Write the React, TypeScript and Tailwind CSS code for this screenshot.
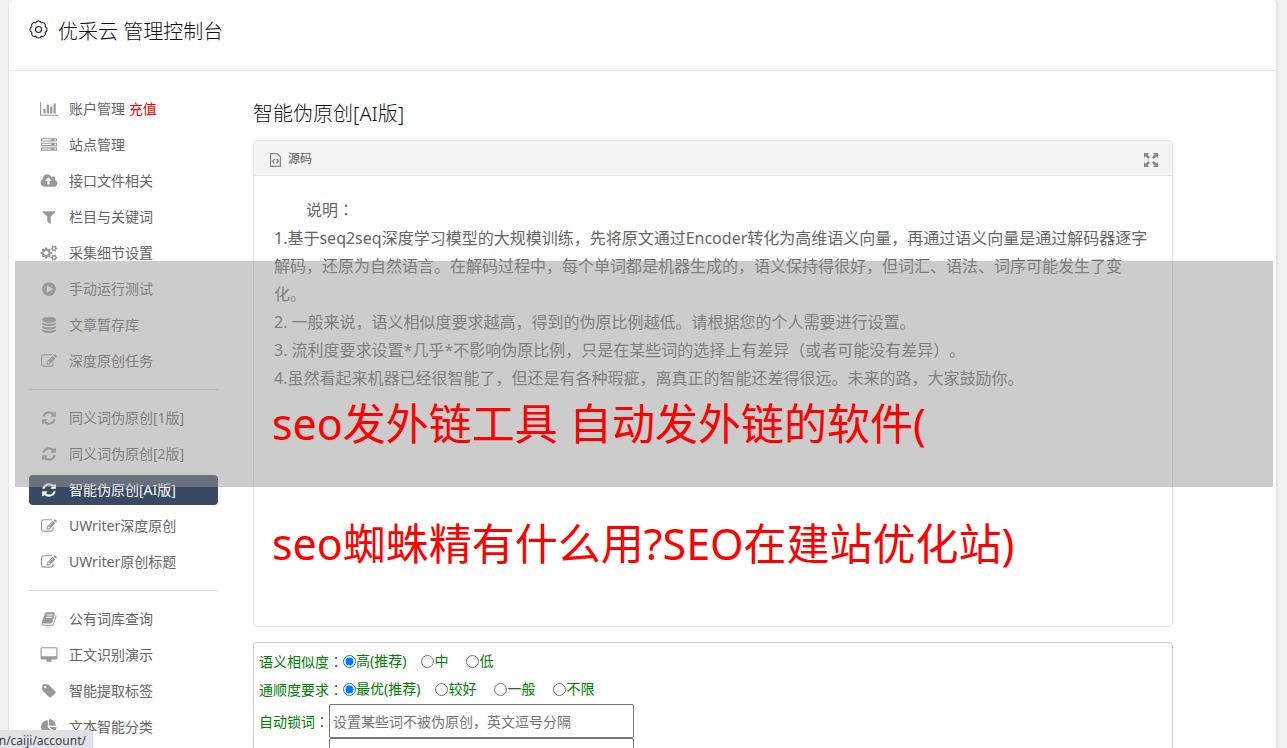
import { useState } from 'react';
import type { ReactNode } from 'react';

const icons = {
  chart: { box: '0 0 2048 1792', wide: true, d: 'M640 896v512h-256v-512h256zM1024 384v1024h-256v-1024h256zM2048 1536v128h-2048v-1536h128v1408h1920zM1408 640v768h-256v-768h256zM1792 256v1152h-256v-1152h256z' },
  server: { box: '0 0 1792 1792', wide: false, d: 'M128 1408h1024v-128h-1024v128zM128 896h1024v-128h-1024v128zM1696 1344q0-40-28-68t-68-28-68 28-28 68 28 68 68 28 68-28 28-68zM128 384h1024v-128h-1024v128zM1696 832q0-40-28-68t-68-28-68 28-28 68 28 68 68 28 68-28 28-68zM1696 320q0-40-28-68t-68-28-68 28-28 68 28 68 68 28 68-28 28-68zM1792 1152v384h-1792v-384h1792zM1792 640v384h-1792v-384h1792zM1792 128v384h-1792v-384h1792z' },
  cloud: { box: '-128 0 2048 1792', wide: true, d: 'M1216 864q0-14-9-23l-352-352q-9-9-23-9t-23 9l-351 351q-10 12-10 24 0 14 9 23t23 9h224v352q0 13 9.5 22.5t22.5 9.5h192q13 0 22.5-9.5t9.5-22.5v-352h224q13 0 22.5-9.5t9.5-22.5zm640 288q0 159-112.5 271.5t-271.5 112.5h-1088q-185 0-316.5-131.5t-131.5-316.5q0-130 70-240t188-165q-2-30-2-43 0-212 150-362t362-150q156 0 285.5 87t188.5 231q71-62 166-62 106 0 181 75t75 181q0 76-41 138 130 31 213.5 135.5t83.5 238.5z' },
  filter: { box: '0 0 1792 1792', wide: false, d: 'M1595 295q17 41-14 70l-493 493v742q0 42-39 59-13 5-25 5-27 0-45-19l-256-256q-19-19-19-45v-486l-493-493q-31-29-14-70 17-39 59-39h1280q42 0 59 39z' },
  cogs: { box: '-128 0 2048 1792', wide: true, d: 'M832 896q0-106-75-181t-181-75-181 75-75 181 75 181 181 75 181-75 75-181zm768 512q0-52-38-90t-90-38-90 38-38 90q0 53 37.5 90.5t90.5 37.5 90.5-37.5 37.5-90.5zm0-1024q0-52-38-90t-90-38-90 38-38 90q0 53 37.5 90.5t90.5 37.5 90.5-37.5 37.5-90.5zm-384 421v185q0 10-7 19.5t-16 10.5l-155 24q-11 35-32 76 34 48 90 115 7 11 7 20 0 12-7 19-23 30-82.5 89.5t-78.5 59.5q-11 0-21-7l-115-90q-37 19-77 31-11 108-23 155-7 24-30 24h-186q-11 0-20-7.5t-10-17.5l-23-153q-34-10-75-31l-118 89q-7 7-20 7-11 0-21-8-144-133-144-160 0-9 7-19 10-14 41-53t47-61q-23-44-35-82l-152-24q-10-1-17-9.5t-7-19.5v-185q0-10 7-19.5t16-10.5l155-24q11-35 32-76-34-48-90-115-7-11-7-20 0-12 7-20 22-30 82-89t79-59q11 0 21 7l115 90q34-18 77-32 11-108 23-154 7-24 30-24h186q11 0 20 7.5t10 17.5l23 153q34 10 75 31l118-89q8-7 20-7 11 0 21 8 144 133 144 160 0 8-7 19-12 16-42 54t-45 60q23 48 34 82l152 23q10 2 17 10.5t7 19.5zm640 533v140q0 16-149 31-12 27-30 52 51 113 51 138 0 4-4 7-122 71-124 71-8 0-46-47t-52-68q-20 2-30 2t-30-2q-14 21-52 68t-46 47q-2 0-124-71-4-3-4-7 0-25 51-138-18-25-30-52-149-15-149-31v-140q0-16 149-31 13-29 30-52-51-113-51-138 0-4 4-7 4-2 35-20t59-34 30-16q8 0 46 46.5t52 67.5q20-2 30-2t30 2q51-71 92-112l6-2q4 0 124 70 4 3 4 7 0 25-51 138 17 23 30 52 149 15 149 31zm0-1024v140q0 16-149 31-12 27-30 52 51 113 51 138 0 4-4 7-122 71-124 71-8 0-46-47t-52-68q-20 2-30 2t-30-2q-14 21-52 68t-46 47q-2 0-124-71-4-3-4-7 0-25 51-138-18-25-30-52-149-15-149-31v-140q0-16 149-31 13-29 30-52-51-113-51-138 0-4 4-7 4-2 35-20t59-34 30-16q8 0 46 46.5t52 67.5q20-2 30-2t30 2q51-71 92-112l6-2q4 0 124 70 4 3 4 7 0 25-51 138 17 23 30 52 149 15 149 31z' },
  play: { box: '0 0 1792 1792', wide: false, d: 'M896 128q209 0 385.5 103t279.5 279.5 103 385.5-103 385.5-279.5 279.5-385.5 103-385.5-103-279.5-279.5-103-385.5 103-385.5 279.5-279.5 385.5-103zm384 823q32-18 32-55t-32-55l-544-320q-31-19-64-1-32 19-32 56v640q0 37 32 56 16 8 32 8 17 0 32-9z' },
  database: { box: '0 0 1792 1792', wide: false, d: 'M896 768q237 0 443-43t325-127v170q0 69-103 128t-280 93.5-385 34.5-385-34.5-280-93.5-103-128v-170q119 84 325 127t443 43zm0 768q237 0 443-43t325-127v170q0 69-103 128t-280 93.5-385 34.5-385-34.5-280-93.5-103-128v-170q119 84 325 127t443 43zm0-384q237 0 443-43t325-127v170q0 69-103 128t-280 93.5-385 34.5-385-34.5-280-93.5-103-128v-170q119 84 325 127t443 43zm0-1152q208 0 385 34.5t280 93.5 103 128v128q0 69-103 128t-280 93.5-385 34.5-385-34.5-280-93.5-103-128v-128q0-69 103-128t280-93.5 385-34.5z' },
  edit: { box: '0 0 1792 1792', wide: false, d: 'M888 1184l116-116-152-152-116 116v56h96v96h56zm440-720q-16-16-33 1l-350 350q-17 17-1 33t33-1l350-350q17-17 1-33zm80 594v190q0 119-84.5 203.5t-203.5 84.5h-832q-119 0-203.5-84.5t-84.5-203.5v-832q0-119 84.5-203.5t203.5-84.5h832q63 0 117 25 15 7 18 23 3 17-9 29l-49 49q-14 14-32 8-23-6-45-6h-832q-66 0-113 47t-47 113v832q0 66 47 113t113 47h832q66 0 113-47t47-113v-126q0-13 9-22l64-64q15-15 35-7t20 29zm-96-738l288 288-672 672h-288v-288zm444 132l-92 92-288-288 92-92q28-28 68-28t68 28l152 152q28 28 28 68t-28 68z' },
  refresh: { box: '0 0 1792 1792', wide: false, d: 'M1639 1056q0 5-1 7-64 268-268 434.5t-478 166.5q-146 0-282.5-55t-243.5-157l-129 129q-19 19-45 19t-45-19-19-45v-448q0-26 19-45t45-19h448q26 0 45 19t19 45-19 45l-137 137q71 66 161 102t187 36q134 0 250-65t186-179q11-17 53-117 8-23 30-23h192q13 0 22.5 9.5t9.5 22.5zm25-800v448q0 26-19 45t-45 19h-448q-26 0-45-19t-19-45 19-45l138-138q-148-137-349-137-134 0-250 65t-186 179q-11 17-53 117-8 23-30 23h-199q-13 0-22.5-9.5t-9.5-22.5v-7q65-268 270-434.5t480-166.5q146 0 284 55.5t245 156.5l130-129q19-19 45-19t45 19 19 45z' },
  book: { box: '0 0 1792 1792', wide: false, d: 'M1703 478q40 57 18 129l-275 906q-19 64-76.5 107.5t-122.5 43.5h-923q-77 0-148.5-53.5t-99.5-131.5q-24-67-2-127 0-4 3-27t4-37q1-8-3-21.5t-3-19.5q2-11 8-21t16.5-23.5 16.5-23.5q23-38 45-91.5t30-91.5q3-10 .5-30t-.5-28q3-11 17-28t17-23q21-36 42-92t25-90q1-9-2.5-32t.5-28q4-13 22-30.5t22-22.5q19-26 42.5-84.5t27.5-96.5q1-8-3-25.5t-2-26.5q2-8 9-18t18-23 17-21q8-12 16.5-30.5t15-35 16-36 19.5-32 26.5-23.5 36-11.5 47.5 5.5l-1 3q38-9 51-9h761q74 0 114 56t18 130l-274 906q-36 119-71.5 153.5t-128.5 34.5h-869q-27 0-38 15-11 16-1 43 24 70 144 70h923q29 0 56-15.5t35-41.5l300-987q7-22 5-57 38 15 59 43zm-1064 2q-4 13 2 22.5t20 9.5h608q13 0 25.5-9.5t16.5-22.5l21-64q4-13-2-22.5t-20-9.5h-608q-13 0-25.5 9.5t-16.5 22.5zm-83 256q-4 13 2 22.5t20 9.5h608q13 0 25.5-9.5t16.5-22.5l21-64q4-13-2-22.5t-20-9.5h-608q-13 0-25.5 9.5t-16.5 22.5z' },
  desktop: { box: '-128 0 2048 1792', wide: true, d: 'M1728 992v-832q0-13-9.5-22.5t-22.5-9.5h-1600q-13 0-22.5 9.5t-9.5 22.5v832q0 13 9.5 22.5t22.5 9.5h1600q13 0 22.5-9.5t9.5-22.5zm128-832v1088q0 66-47 113t-113 47h-544q0 37 16 77.5t32 71 16 43.5q0 26-19 45t-45 19h-512q-26 0-45-19t-19-45q0-14 16-44t32-70 16-78h-544q-66 0-113-47t-47-113v-1088q0-66 47-113t113-47h1600q66 0 113 47t47 113z' },
  tag: { box: '0 0 1792 1792', wide: false, d: 'M576 448q0-53-37.5-90.5t-90.5-37.5-90.5 37.5-37.5 90.5 37.5 90.5 90.5 37.5 90.5-37.5 37.5-90.5zm1067 576q0 53-37 90l-491 492q-39 37-91 37-53 0-90-37l-715-716q-38-37-64.5-101t-26.5-117v-416q0-52 38-90t90-38h416q53 0 117 26.5t102 64.5l715 714q37 39 37 91z' },
  pie: { box: '0 0 1792 1792', wide: false, d: 'M768 890l546 546q-106 108-247.5 168t-298.5 60q-209 0-385.5-103t-279.5-279.5-103-385.5 103-385.5 279.5-279.5 385.5-103v762zm187 6h773q0 157-60 298.5t-168 247.5zm709-128h-768v-768q209 0 385.5 103t279.5 279.5 103 385.5z' },
};

type IconName = keyof typeof icons;

function Icon({ name }: { name: IconName }) {
  const icon = icons[name];
  return (
    <svg viewBox={icon.box} className={icon.wide ? 'h-4 w-[18px]' : 'h-4 w-4'} fill="currentColor" aria-hidden="true">
      <path d={icon.d} />
    </svg>
  );
}

function GearIcon() {
  return (
    <svg viewBox="0 0 19 19" className="mt-1 size-[19px] text-[#222]" fill="none" stroke="currentColor" strokeWidth="1.1" strokeLinejoin="round" aria-hidden="true">
      <path d="M6.74 2.85a2.95 2.95 0 0 1 5.52 0a2.95 2.95 0 0 1 3.89 3.89a2.95 2.95 0 0 1 0 5.52a2.95 2.95 0 0 1-3.89 3.89a2.95 2.95 0 0 1-5.52 0a2.95 2.95 0 0 1-3.89-3.89a2.95 2.95 0 0 1 0-5.52a2.95 2.95 0 0 1 3.89-3.89z" />
      <circle cx="9.5" cy="9.5" r="3" />
    </svg>
  );
}

function FileCodeIcon() {
  return (
    <svg viewBox="0 0 11 14" className="mt-0.5 h-3.5 w-[11px] text-[#888]" fill="none" stroke="currentColor" aria-hidden="true">
      <path d="M.6.6h6.6l3.2 3.2v9.6H.6z" strokeWidth="1.2" />
      <path d="M4.5 6 2.5 8.2l2 2.2M6.5 6l2 2.2-2 2.2" strokeWidth="1.3" />
    </svg>
  );
}

function ExpandIcon() {
  return (
    <svg viewBox="0 0 14 14" className="mt-0.5 size-3.5" fill="currentColor" aria-hidden="true">
      <path d="M0 0h5L3.4 1.6 6 4.3 4.3 6 1.6 3.4 0 5zM14 0v5l-1.6-1.6L9.7 6 8 4.3l2.6-2.7L9 0zM0 14V9l1.6 1.6L4.3 8 6 9.7l-2.6 2.7L5 14zM14 14H9l1.6-1.6L8 9.7 9.7 8l2.7 2.6L14 9z" />
    </svg>
  );
}

const groups: { icon: IconName; label: string; extra?: string; active?: boolean }[][] = [
  [
    { icon: 'chart', label: '账户管理', extra: '充值' },
    { icon: 'server', label: '站点管理' },
    { icon: 'cloud', label: '接口文件相关' },
    { icon: 'filter', label: '栏目与关键词' },
    { icon: 'cogs', label: '采集细节设置' },
    { icon: 'play', label: '手动运行测试' },
    { icon: 'database', label: '文章暂存库' },
    { icon: 'edit', label: '深度原创任务' },
  ],
  [
    { icon: 'refresh', label: '同义词伪原创[1版]' },
    { icon: 'refresh', label: '同义词伪原创[2版]' },
    { icon: 'refresh', label: '智能伪原创[AI版]', active: true },
    { icon: 'edit', label: 'UWriter深度原创' },
    { icon: 'edit', label: 'UWriter原创标题' },
  ],
  [
    { icon: 'book', label: '公有词库查询' },
    { icon: 'desktop', label: '正文识别演示' },
    { icon: 'tag', label: '智能提取标签' },
    { icon: 'pie', label: '文本智能分类' },
  ],
];

function Sidebar() {
  return (
    <nav className="w-[189px] shrink-0 text-sm text-[#666]">
      {groups.map((group, i) => (
        <ul key={i} className={i === 0 ? 'space-y-1.5' : 'mt-[13px] space-y-1.5 border-t border-[#ddd] pt-[13px]'}>
          {group.map((item) => (
            <li key={item.label}>
              <a
                href="#"
                className={
                  item.active
                    ? 'flex h-[30px] items-center gap-2.5 rounded bg-[#394963] px-2.5 text-white'
                    : 'flex h-[30px] items-center gap-2.5 rounded px-2.5'
                }
              >
                <span className={item.active ? 'flex w-5 justify-center' : 'flex w-5 justify-center text-[#999]'}>
                  <Icon name={item.icon} />
                </span>
                <span>
                  {item.label}
                  {item.extra && <span className="text-[#f00]"> {item.extra}</span>}
                </span>
              </a>
            </li>
          ))}
        </ul>
      ))}
    </nav>
  );
}

// The Japanese glyph of the full-width colon sits in the middle of its cell.
function Colon() {
  return (
    <span lang="ja" className="font-['Noto_Sans_CJK_JP',sans-serif]">
      ：
    </span>
  );
}

function RadioRow({ name, label, options }: { name: string; label: string; options: string[] }) {
  const [value, setValue] = useState(options[0]);
  return (
    <fieldset className="flex h-7 items-center">
      <legend className="float-left">
        {label}
        <Colon />
      </legend>
      <div className="flex items-center gap-[18px]">
        {options.map((option) => (
          <label key={option} className="flex items-center first:-mr-[3px]">
            <input
              type="radio"
              name={name}
              checked={value === option}
              onChange={() => setValue(option)}
              className="size-[13px]"
            />
            {option}
          </label>
        ))}
      </div>
    </fieldset>
  );
}

function Banner({ children }: { children: ReactNode }) {
  return <p className="text-[43px] leading-[60px] text-[#f00]">{children}</p>;
}

export default function App() {
  return (
    <div
      lang="zh-CN"
      className="relative h-screen overflow-hidden bg-[#f0f0f0] pr-[9px] pl-2 font-['Noto_Sans','Noto_Sans_CJK_SC',sans-serif] [text-spacing-trim:space-all]"
    >
      <div className="min-h-full rounded-t border-r-2 border-l border-[#e5e5e5] bg-white">
        <header className="flex h-[71px] items-start gap-2.5 border-b border-[#e5e5e5] px-5 pt-4">
          <GearIcon />
          <h1 className="text-xl leading-8 font-light text-[#111]">优采云 管理控制台</h1>
        </header>
        <div className="flex gap-[35px] px-5 pt-[23px]">
          <Sidebar />
          <main className="min-w-0 flex-1 pr-[83px]">
            <h2 className="pt-1 text-xl leading-8 font-light text-[#111]">智能伪原创[AI版]</h2>
            <section className="mt-2.5 overflow-hidden rounded border border-[#e5e5e5]">
              <div className="flex h-[35px] items-center justify-between border-b border-[#e5e5e5] bg-[#f4f4f4] pt-px pr-3.5 pl-4 text-xs text-[#555]">
                <div className="flex items-center gap-[7px]">
                  <FileCodeIcon />
                  <span>源码</span>
                </div>
                <button type="button" aria-label="全屏" className="text-[#888]">
                  <ExpandIcon />
                </button>
              </div>
              <div className="h-[450px] px-5 pt-[19px] text-base leading-7 text-[#666]">
                <p className="indent-8">
                  说明
                  <Colon />
                </p>
                <p>1.基于seq2seq深度学习模型的大规模训练，先将原文通过Encoder转化为高维语义向量，再通过语义向量是通过解码器逐字解码，还原为自然语言。在解码过程中，每个单词都是机器生成的，语义保持得很好，但词汇、语法、词序可能发生了变化。</p>
                <p>2. 一般来说，语义相似度要求越高，得到的伪原比例越低。请根据您的个人需要进行设置。</p>
                <p>3. 流利度要求设置*几乎*不影响伪原比例，只是在某些词的选择上有差异（或者可能没有差异）。</p>
                <p>4.虽然看起来机器已经很智能了，但还是有各种瑕疵，离真正的智能还差得很远。未来的路，大家鼓励你。</p>
              </div>
            </section>
            <form className="mt-[15px] rounded border border-[#ccc] px-[5px] pt-1 text-sm text-[#008000]">
              <RadioRow name="similarity" label="语义相似度" options={['高(推荐)', '中', '低']} />
              <RadioRow name="fluency" label="通顺度要求" options={['最优(推荐)', '较好', '一般', '不限']} />
              <div className="mt-px flex items-center">
                <label htmlFor="lock">
                  自动锁词
                  <Colon />
                </label>
                <input
                  id="lock"
                  placeholder="设置某些词不被伪原创，英文逗号分隔"
                  className="h-[34px] w-[305px] rounded-xs border border-[#767676] px-[3px] placeholder:text-[#757575]"
                />
              </div>
              <div className="flex pl-[70px]">
                <textarea aria-label="原文" className="h-40 w-[305px] resize-none rounded-xs border border-[#767676] px-[3px]" />
              </div>
            </form>
          </main>
        </div>
      </div>
      <div className="absolute top-[261px] right-3.5 left-[15px] h-[226px] bg-[#999]/50" />
      <div className="absolute top-[394px] left-[272px] flex flex-col gap-[60px]">
        <Banner>seo发外链工具 自动发外链的软件(</Banner>
        <Banner>seo蜘蛛精有什么用?SEO在建站优化站)</Banner>
      </div>
      <div className="absolute bottom-0 left-0 flex h-[18px] w-[93px] items-center justify-end overflow-hidden rounded-tr bg-[#dee1e6] pt-1 pr-[7px] text-xs text-[#3c4043]">
        n/caiji/account/
      </div>
    </div>
  );
}
